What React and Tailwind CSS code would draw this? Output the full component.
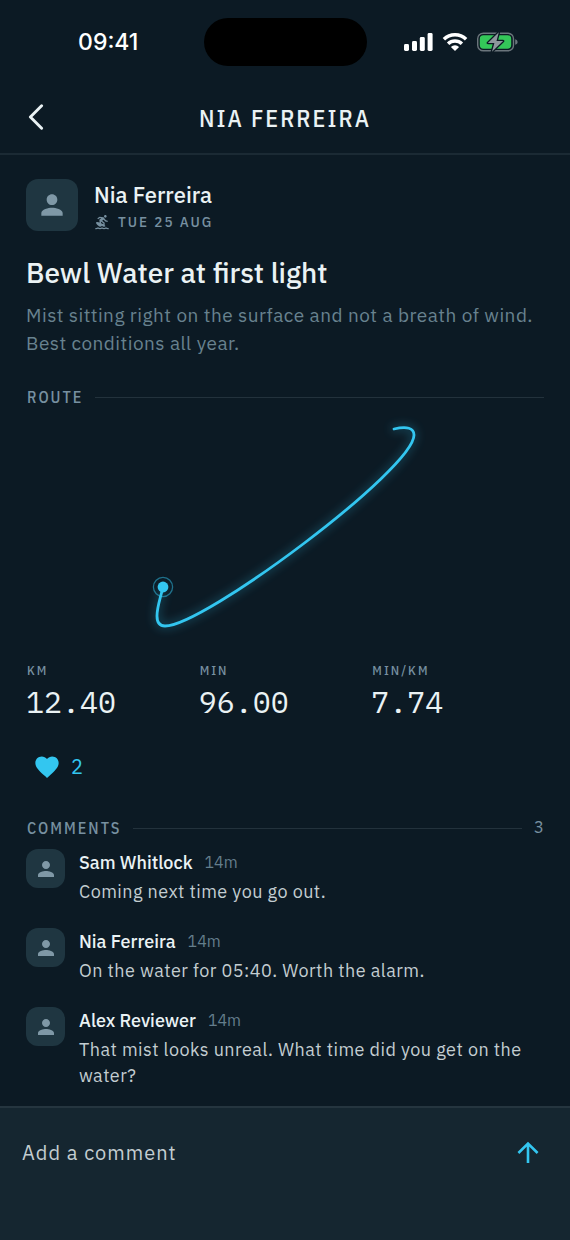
import { MdFavorite, MdPerson, MdSurfing } from 'react-icons/md'

const stats = [
  { label: 'KM', value: '12.40' },
  { label: 'MIN', value: '96.00' },
  { label: 'MIN/KM', value: '7.74' },
]

const comments = [
  { name: 'Sam Whitlock', age: '14m', text: 'Coming next time you go out.' },
  { name: 'Nia Ferreira', age: '14m', text: 'On the water for 05:40. Worth the alarm.' },
  {
    name: 'Alex Reviewer',
    age: '14m',
    text: 'That mist looks unreal. What time did you get on the water?',
  },
]

const routePath =
  'M137 178C134 191 131 198 131 207C131 214 134 217 139 217C178 217 388 60 388 26C388 19 381 17 368 20'

function SignalIcon() {
  return (
    <svg width="29" height="18" viewBox="0 0 29 18" fill="#fff" aria-hidden="true">
      <rect x="0" y="11" width="5" height="7" rx="1.4" />
      <rect x="8" y="8" width="5" height="10" rx="1.4" />
      <rect x="15.8" y="4" width="5" height="14" rx="1.4" />
      <rect x="23.6" y="0" width="5" height="18" rx="1.4" />
    </svg>
  )
}

function WifiIcon() {
  return (
    <svg width="26" height="18" viewBox="0 0 26 18" aria-hidden="true">
      <path d="M1.9 6.3A16 16 0 0 1 24.1 6.3" fill="none" stroke="#fff" strokeWidth="3.5" />
      <path d="M6.1 10.8A10 10 0 0 1 19.9 10.8" fill="none" stroke="#fff" strokeWidth="3.5" />
      <path d="M13 18 8.9 13.9A5.9 5.9 0 0 1 17.1 13.9Z" fill="#fff" />
    </svg>
  )
}

function BatteryIcon() {
  return (
    <svg width="41" height="20" viewBox="0 0 41 20" aria-hidden="true">
      <rect x="0.7" y="1.2" width="35.8" height="17.6" rx="5.6" fill="none" stroke="#6b757c" strokeWidth="1.4" />
      <path d="M38.2 7.2c1.6.5 2.4 1.5 2.4 2.8s-.8 2.3-2.4 2.8z" fill="#6b757c" />
      <rect x="2.8" y="3.3" width="31.4" height="13.4" rx="3.6" fill="#34c759" />
      <path
        d="M21.8.3 10.9 10.9h6.5L15 19.7 26.1 9.1h-6.6z"
        fill="#8d979d"
        stroke="#0c1a24"
        strokeWidth="2.6"
        strokeLinejoin="round"
        paintOrder="stroke"
      />
    </svg>
  )
}

function StatusBar() {
  return (
    <div className="grid h-[84px] grid-cols-[1fr_163px_1fr] items-center">
      <time className="pl-[13px] text-center font-['Inter',sans-serif] text-[23px] font-medium text-white">
        09:41
      </time>
      <div className="h-12 rounded-full bg-black" />
      <div className="flex items-center justify-center gap-[9px] pr-[14px]">
        <SignalIcon />
        <WifiIcon />
        <BatteryIcon />
      </div>
    </div>
  )
}

function Header() {
  return (
    <header className="grid h-[71px] grid-cols-[72px_1fr_72px] items-center border-b-2 border-[#1b2a34]">
      <button type="button" aria-label="Back" className="flex h-full items-center pb-1 pl-[27px]">
        <svg width="18" height="26" viewBox="0 0 18 26" fill="none" aria-hidden="true">
          <path
            d="M14.6 1.8 3.4 13 14.6 24.2"
            stroke="#eaf2f4"
            strokeWidth="2.9"
            strokeLinecap="round"
            strokeLinejoin="round"
          />
        </svg>
      </button>
      <h1 className="pb-[2px] text-center font-['IBM_Plex_Sans_Condensed','Roboto',sans-serif] text-[24px] leading-8 font-medium uppercase tracking-[2px]">
        Nia Ferreira
      </h1>
    </header>
  )
}

function SectionTitle({ title, count }) {
  return (
    <div className="flex h-6 items-center gap-3">
      <h3 className="pl-px font-['IBM_Plex_Sans_Condensed','Roboto',sans-serif] text-[16px] font-medium uppercase tracking-[2px] text-[#7790a0]">
        {title}
      </h3>
      <div className="h-px flex-1 bg-[#23323c]" />
      {count !== undefined && <span className="text-[17px] text-[#7790a0]">{count}</span>}
    </div>
  )
}

function RouteChart() {
  return (
    <svg viewBox="0 0 518 236" className="w-full" role="img" aria-label="Route">
      <defs>
        <filter id="glow" x="-20%" y="-20%" width="140%" height="140%">
          <feGaussianBlur stdDeviation="5" />
        </filter>
      </defs>
      <g fill="none" strokeLinecap="round" stroke="#33c6f0">
        <path d={routePath} strokeWidth="6" opacity="0.26" filter="url(#glow)" />
        <path d={routePath} strokeWidth="2.8" />
        <circle cx="137" cy="178" r="9.6" strokeWidth="1.3" opacity="0.5" />
      </g>
      <circle cx="137" cy="178" r="5.4" fill="#33c6f0" />
    </svg>
  )
}

function Comment({ name, age, text }) {
  return (
    <li className="flex gap-[14px]">
      <div className="flex size-[39px] shrink-0 items-center justify-center rounded-xl bg-[#1f3641]">
        <MdPerson className="size-6 text-[#7f98a6]" />
      </div>
      <div>
        <div className="flex h-[26px] items-center gap-3">
          <span className="text-[18px] font-medium">{name}</span>
          <span className="text-[16px] text-[#647e8c]">{age}</span>
        </div>
        <p className="mt-1 text-[18px] leading-[26px] tracking-wide text-[#c3cdd1]">{text}</p>
      </div>
    </li>
  )
}

export default function App() {
  return (
    <div className="flex min-h-screen flex-col bg-[#0c1a24] font-['IBM_Plex_Sans','Roboto',sans-serif] text-[#eaf2f4]">
      <StatusBar />
      <Header />
      <main className="flex-1 px-[26px] pt-6 pb-3">
        <div className="flex items-start gap-4">
          <div className="flex size-[52px] items-center justify-center rounded-xl bg-[#1f3641]">
            <MdPerson className="size-8 text-[#7f98a6]" />
          </div>
          <div>
            <p className="text-[22px] leading-8 font-medium">Nia Ferreira</p>
            <p className="flex h-[22px] items-center gap-2 font-['IBM_Plex_Sans_Condensed','Roboto',sans-serif] text-[15px] font-medium uppercase tracking-[2px] text-[#7790a0]">
              <MdSurfing className="size-4" />
              Tue 25 Aug
            </p>
          </div>
        </div>
        <h2 className="mt-[22px] text-[28px] leading-9 font-medium">Bewl Water at first light</h2>
        <p className="mt-[10px] text-[19px] leading-7 tracking-wide text-[#68828f]">
          Mist sitting right on the surface and not a breath of wind. Best conditions all year.
        </p>
        <div className="mt-7">
          <SectionTitle title="Route" />
          <RouteChart />
        </div>
        <dl className="mt-[18px] grid grid-cols-3">
          {stats.map((s) => (
            <div key={s.label}>
              <dt className="pl-px font-['IBM_Plex_Sans_Condensed','Roboto',sans-serif] text-[13px] leading-4 font-medium tracking-[2px] text-[#7790a0]">
                {s.label}
              </dt>
              <dd className="mt-[3px] font-['IBM_Plex_Mono','Liberation_Mono',monospace] text-[30px] leading-10">
                {s.value}
              </dd>
            </div>
          ))}
        </dl>
        <button
          type="button"
          aria-label="Like, 2 likes"
          className="mt-[23px] flex h-11 items-center gap-[10px] px-[7px] text-[20px] text-[#33c6f0]"
        >
          <MdFavorite className="size-7" />
          2
        </button>
        <section className="mt-[27px]">
          <SectionTitle title="Comments" count={3} />
          <ul className="mt-[9px] flex flex-col gap-[23px]">
            {comments.map((c) => (
              <Comment key={c.name} {...c} />
            ))}
          </ul>
        </section>
      </main>
      <form
        className="border-t-2 border-[#25353f] bg-[#152630] px-[22px] pt-5 pb-[62px]"
        onSubmit={(e) => e.preventDefault()}
      >
        <div className="flex h-[50px] items-center">
          <input
            type="text"
            aria-label="Add a comment"
            placeholder="Add a comment"
            className="min-w-0 flex-1 bg-transparent text-[20px] tracking-wider outline-none placeholder:text-[#c3cdd1]"
          />
          <button type="submit" aria-label="Send" className="flex h-full items-center px-2">
            <svg width="24" height="24" viewBox="0 0 24 24" fill="none" aria-hidden="true">
              <path d="M12 22V3M2.4 12 12 2.6 21.6 12" stroke="#33c6f0" strokeWidth="2.6" />
            </svg>
          </button>
        </div>
      </form>
    </div>
  )
}
